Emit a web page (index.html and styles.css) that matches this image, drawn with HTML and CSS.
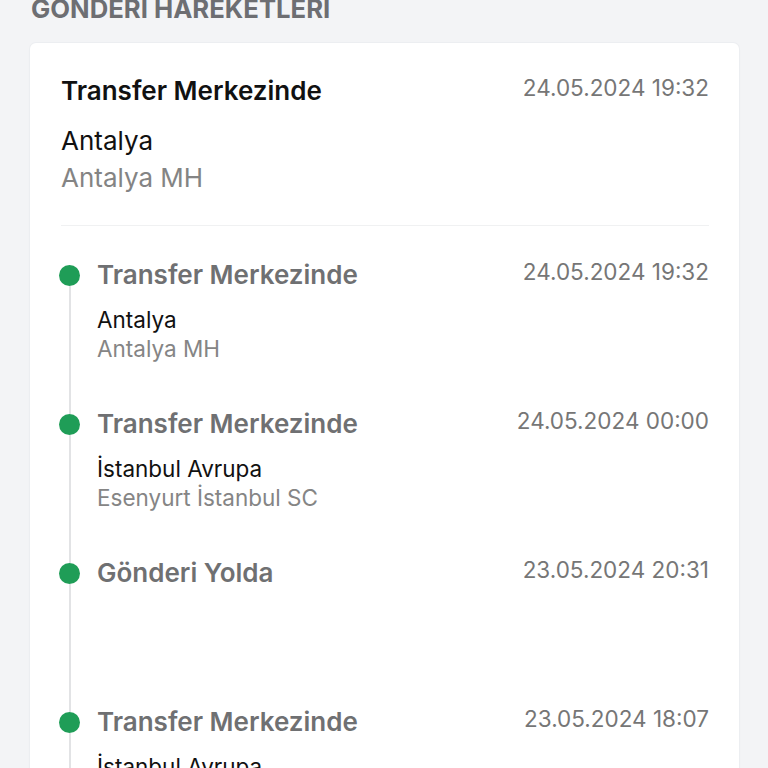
FILE: index.html
```html
<!DOCTYPE html>
<html lang="tr">
<head>
    <meta charset="UTF-8">
    <meta name="viewport" content="width=device-width, initial-scale=1.0">
    <title>Gönderi Hareketleri</title>
    <link rel="stylesheet" href="styles.css">
</head>
<body>
    <div class="page">
        <h2 class="section-title">GÖNDERİ HAREKETLERİ</h2>
        <div class="card">
            <div class="current">
                <div class="row">
                    <span class="current-status">Transfer Merkezinde</span>
                    <span class="date">24.05.2024 19:32</span>
                </div>
                <div class="current-place">Antalya</div>
                <div class="current-branch">Antalya MH</div>
            </div>
            <ul class="timeline">
                <li class="event">
                    <div class="marker"><span class="stem-top"></span><span class="dot"></span><span class="stem"></span></div>
                    <div class="event-body">
                        <div class="row">
                            <span class="event-status">Transfer Merkezinde</span>
                            <span class="date">24.05.2024 19:32</span>
                        </div>
                        <div class="place">Antalya</div>
                        <div class="branch">Antalya MH</div>
                    </div>
                </li>
                <li class="event">
                    <div class="marker"><span class="stem-top"></span><span class="dot"></span><span class="stem"></span></div>
                    <div class="event-body">
                        <div class="row">
                            <span class="event-status">Transfer Merkezinde</span>
                            <span class="date">24.05.2024 00:00</span>
                        </div>
                        <div class="place">İstanbul Avrupa</div>
                        <div class="branch">Esenyurt İstanbul SC</div>
                    </div>
                </li>
                <li class="event">
                    <div class="marker"><span class="stem-top"></span><span class="dot"></span><span class="stem"></span></div>
                    <div class="event-body">
                        <div class="row">
                            <span class="event-status">Gönderi Yolda</span>
                            <span class="date">23.05.2024 20:31</span>
                        </div>
                    </div>
                </li>
                <li class="event">
                    <div class="marker"><span class="stem-top"></span><span class="dot"></span><span class="stem"></span></div>
                    <div class="event-body">
                        <div class="row">
                            <span class="event-status">Transfer Merkezinde</span>
                            <span class="date">23.05.2024 18:07</span>
                        </div>
                        <div class="place">İstanbul Avrupa</div>
                        <div class="branch">Esenyurt İstanbul SC</div>
                    </div>
                </li>
            </ul>
        </div>
    </div>
</body>
</html>
```

FILE: styles.css
```css
body {
    font-family: Inter, 'Noto Sans', sans-serif;
    background: #f3f4f6;
    margin: 0;
    padding: 0;
    overflow: hidden;
}
.page {
    padding: 0 29px 0 30px;
}
.section-title {
    margin: -5.5px 0 20.5px 1px;
    font-size: 25.7px;
    line-height: 28px;
    font-weight: 700;
    color: #6d6e72;
}
.card {
    background: #fff;
    border-radius: 6px;
    box-shadow: 0 0 0 1px #eceef1, 0 1px 3px rgba(0,0,0,0.03);
    padding: 33px 30px 0 31px;
}
.row {
    display: flex;
    justify-content: space-between;
    align-items: flex-start;
}
.current-status {
    font-size: 26px;
    line-height: 29px;
    font-weight: 600;
    color: #111;
}
.date {
    font-size: 22.5px;
    line-height: 24px;
    color: #767676;
}
.current-place {
    margin-top: 17px;
    font-size: 26px;
    line-height: 37px;
    color: #111;
}
.current-branch {
    font-size: 26px;
    line-height: 37px;
    color: #848484;
}
.current {
    padding-bottom: 29px;
    border-bottom: 1px solid #f0f1f2;
}
.timeline {
    list-style: none;
    margin: 34px 0 0 -2px;
    padding: 0;
}
.event {
    display: flex;
    gap: 17px;
    min-height: 149px;
}
.marker {
    width: 21px;
    flex-shrink: 0;
    display: flex;
    flex-direction: column;
    align-items: center;
}
.stem-top {
    width: 2px;
    height: 5px;
    background: #e2e3e5;
}
.event:first-child .stem-top {
    background: none;
}
.dot {
    width: 21px;
    height: 21px;
    border-radius: 50%;
    background: #1f9d57;
}
.stem {
    width: 2px;
    flex: 1;
    background: #e2e3e5;
}
.event-body {
    flex: 1;
}
.event-status {
    font-size: 26px;
    line-height: 29px;
    font-weight: 600;
    color: #6f7072;
}
.place {
    margin-top: 16px;
    font-size: 22.5px;
    line-height: 29px;
    color: #111;
}
.branch {
    font-size: 22.5px;
    line-height: 29px;
    color: #858585;
}
```
